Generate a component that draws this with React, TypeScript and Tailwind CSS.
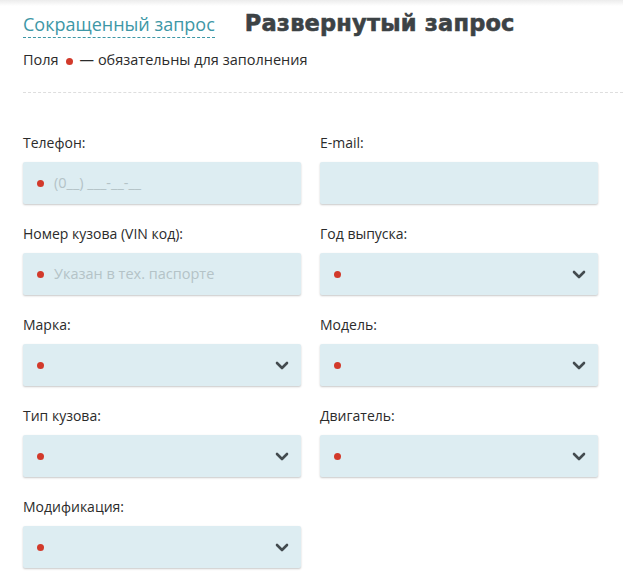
import { ReactNode } from 'react';

const Dot = () => (
  <span className="inline-block w-[7px] h-[7px] rounded-full bg-[#d23a2b] flex-shrink-0" />
);

const Chevron = () => (
  <svg width="14" height="9" viewBox="0 0 14 9" className="flex-shrink-0">
    <path
      d="M2 2l5 5 5-5"
      fill="none"
      stroke="#434b4f"
      strokeWidth="2.6"
      strokeLinecap="round"
      strokeLinejoin="round"
    />
  </svg>
);

const Field = ({
  label,
  children,
}: {
  label: string;
  children?: ReactNode;
}) => (
  <div className="flex flex-col">
    <div className="text-[14px] text-[#2b2b2b] h-[19px] leading-[19px] mb-[10px]">
      {label}
    </div>
    {children}
  </div>
);

const Input = ({ placeholder, dot = true }: { placeholder?: string; dot?: boolean }) => (
  <div className="h-[42px] bg-[#ddedf2] rounded-[2px] shadow-[0_1px_2px_rgba(0,0,0,0.22)] flex items-center pl-[14px] pr-4 gap-[10px]">
    {dot && <Dot />}
    {placeholder && (
      <span className="text-[14.5px] text-[#b4c3c7]">{placeholder}</span>
    )}
  </div>
);

const Select = () => (
  <div className="h-[42px] bg-[#ddedf2] rounded-[2px] shadow-[0_1px_2px_rgba(0,0,0,0.22)] flex items-center justify-between pl-[14px] pr-[12px]">
    <Dot />
    <Chevron />
  </div>
);

const App = () => {
  return (
    <div
      className="w-[623px] h-[577px] bg-white overflow-hidden relative"
      style={{ fontFamily: '"Open Sans", sans-serif' }}
    >
      <div className="absolute top-0 left-0 right-0 h-[6px] bg-gradient-to-b from-[#ececec] to-white" />
      <div className="pl-[23px] pt-[6px]">
        <div className="flex items-end gap-[30px] h-[32px]">
          <span className="text-[18px] text-[#3d97a6] border-b border-dashed border-[#3d97a6] leading-[24px] pb-[1px]">
            Сокращенный запрос
          </span>
          <span
            className="text-[22.5px] font-bold text-[#3c4245] leading-[30px] tracking-[0.2px] [-webkit-text-stroke:0.6px_#3c4245]"
            style={{ fontFamily: '"DejaVu Sans", sans-serif' }}
          >
            Развернутый запрос
          </span>
        </div>
        <div className="flex items-center mt-[12px] text-[14.5px] text-[#2b2b2b] h-[19px]">
          <span>Поля</span>
          <span className="mx-[7px]">
            <Dot />
          </span>
          <span>— обязательны для заполнения</span>
        </div>
        <div className="mt-[23px] border-t border-dashed border-[#dedede]" />
        <div className="grid grid-cols-[278px_278px] gap-x-[19px] gap-y-[20px] mt-[40px]">
          <Field label="Телефон:">
            <Input placeholder="(0__) ___-__-__" />
          </Field>
          <Field label="E-mail:">
            <Input dot={false} />
          </Field>
          <Field label="Номер кузова (VIN код):">
            <Input placeholder="Указан в тех. паспорте" />
          </Field>
          <Field label="Год выпуска:">
            <Select />
          </Field>
          <Field label="Марка:">
            <Select />
          </Field>
          <Field label="Модель:">
            <Select />
          </Field>
          <Field label="Тип кузова:">
            <Select />
          </Field>
          <Field label="Двигатель:">
            <Select />
          </Field>
          <Field label="Модификация:">
            <Select />
          </Field>
        </div>
      </div>
    </div>
  );
};

export default App;
